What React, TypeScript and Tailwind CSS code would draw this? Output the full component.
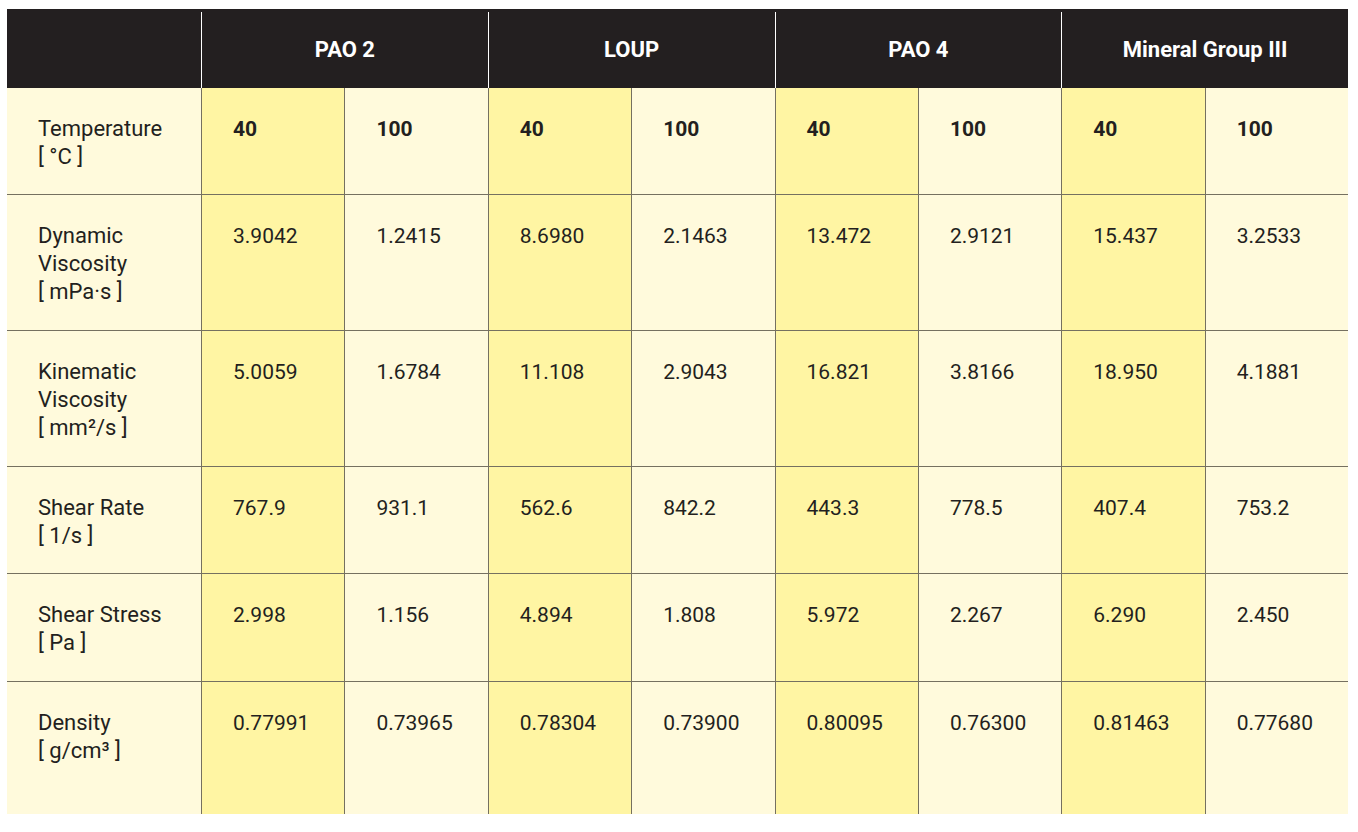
const groups = ['PAO 2', 'LOUP', 'PAO 4', 'Mineral Group III'];

type Row = { label: React.ReactNode; values: string[]; h: string; bold?: boolean };

const rows: Row[] = [
  {
    label: (<>Temperature<br />[ °C ]</>),
    values: ['40', '100', '40', '100', '40', '100', '40', '100'],
    h: 'h-[106px]',
    bold: true,
  },
  {
    label: (<>Dynamic<br />Viscosity<br />[ mPa·s ]</>),
    values: ['3.9042', '1.2415', '8.6980', '2.1463', '13.472', '2.9121', '15.437', '3.2533'],
    h: 'h-[136px]',
  },
  {
    label: (<>Kinematic<br />Viscosity<br />[ mm²/s ]</>),
    values: ['5.0059', '1.6784', '11.108', '2.9043', '16.821', '3.8166', '18.950', '4.1881'],
    h: 'h-[136px]',
  },
  {
    label: (<>Shear Rate<br />[ 1/s ]</>),
    values: ['767.9', '931.1', '562.6', '842.2', '443.3', '778.5', '407.4', '753.2'],
    h: 'h-[107px]',
  },
  {
    label: (<>Shear Stress<br />[ Pa ]</>),
    values: ['2.998', '1.156', '4.894', '1.808', '5.972', '2.267', '6.290', '2.450'],
    h: 'h-[108px]',
  },
  {
    label: (<>Density<br />[ g/cm³ ]</>),
    values: ['0.77991', '0.73965', '0.78304', '0.73900', '0.80095', '0.76300', '0.81463', '0.77680'],
    h: 'h-[133px]',
  },
];

export default function App() {
  return (
    <div className="min-h-screen bg-white pt-[9px] pl-[7px] font-['Roboto',sans-serif] text-[21px] leading-[28px] text-[#231f20]">
      <div className="w-[1341px]">
        {/* header */}
        <div className="grid h-[79px] grid-cols-[194px_repeat(4,1fr)] bg-[#231f20] pt-[3px] text-[22px] text-white">
          <div />
          {groups.map((g) => (
            <div key={g} className="flex items-center justify-center border-l border-white font-bold">
              {g}
            </div>
          ))}
        </div>

        {rows.map((row, i) => (
          <div
            key={i}
            className={`grid grid-cols-[194px_repeat(8,1fr)] ${row.h} ${i > 0 ? 'border-t border-[#757060]' : ''}`}
          >
            <div className="bg-[#fffadc] pl-[31px] pt-[27px] text-[22px]">{row.label}</div>
            {row.values.map((v, j) => (
              <div
                key={j}
                className={`border-l border-[#757060] pl-[31px] pt-[27px] ${j % 2 === 0 ? 'bg-[#fff5a3]' : 'bg-[#fffadc]'} ${row.bold ? 'font-bold' : ''}`}
              >
                {v}
              </div>
            ))}
          </div>
        ))}
      </div>
    </div>
  );
}
